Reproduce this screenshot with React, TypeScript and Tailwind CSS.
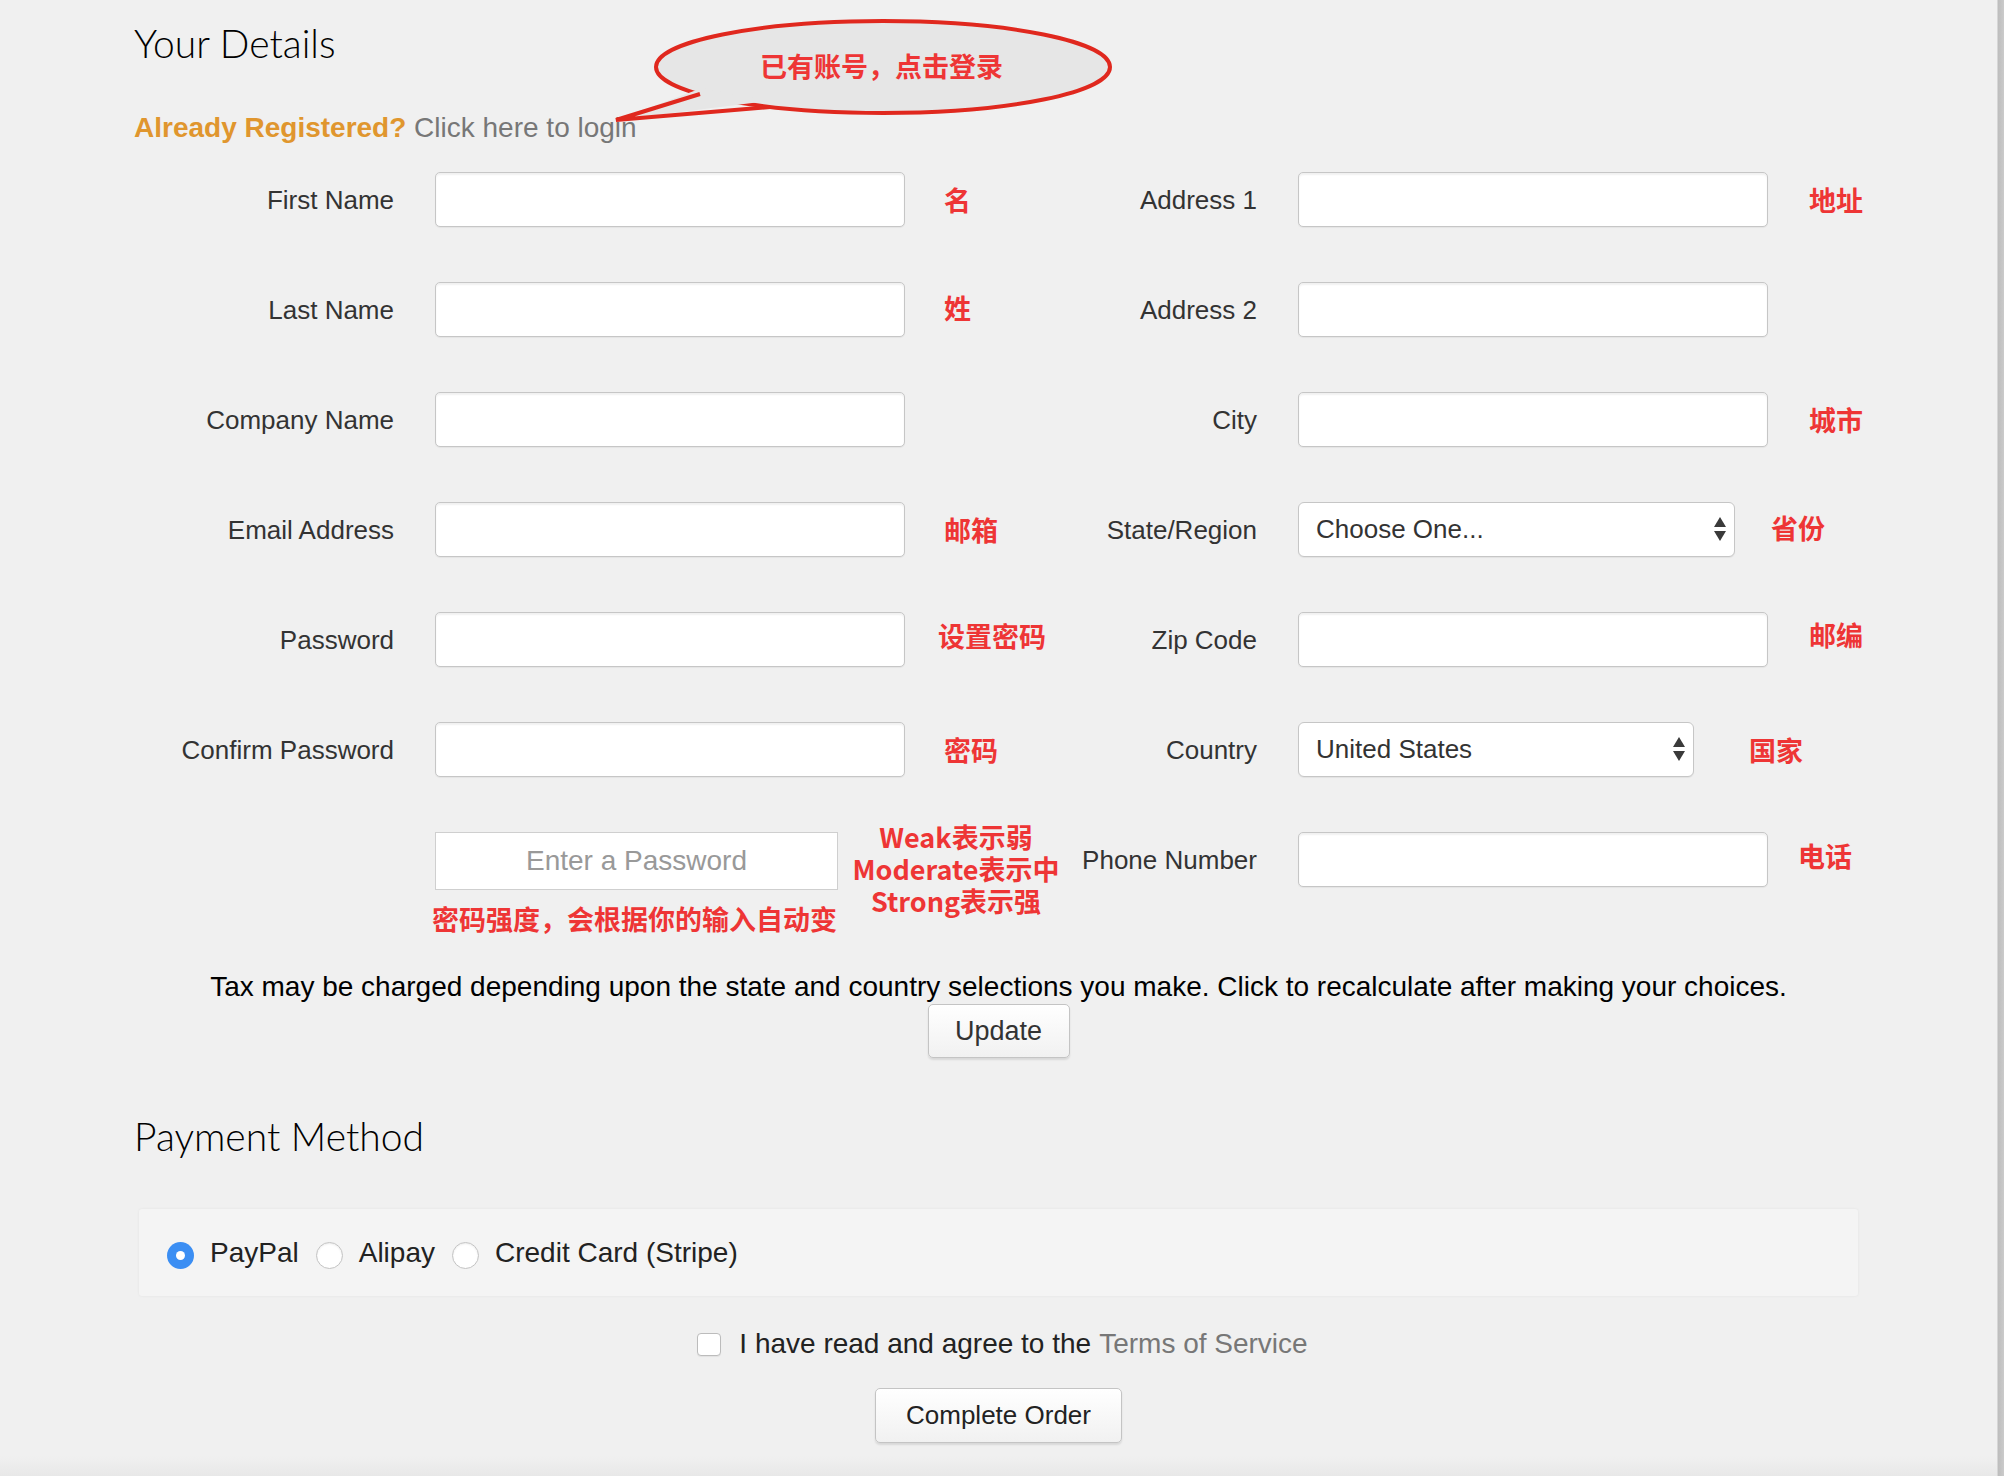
import React from 'react'

const note = "font-['Noto_Sans_CJK_SC','Noto_Sans',sans-serif] font-bold text-[27px] leading-[32px] text-[#ee3535] whitespace-nowrap shrink-0"

function TextInput() {
  return (
    <input
      type="text"
      className="h-[55px] w-[470px] shrink-0 rounded-[5px] border border-[#c6c6c6] bg-white px-4 shadow-[inset_0_2px_2px_rgba(0,0,0,0.06),0_1px_1px_rgba(0,0,0,0.05)] outline-none"
    />
  )
}

function FakeSelect({ value, width }: { value: string; width: string }) {
  return (
    <div
      className={`${width} flex h-[55px] shrink-0 items-center justify-between rounded-[6px] border border-[#c6c6c6] bg-white pl-[17px] pr-[8px] shadow-[0_1px_1px_rgba(0,0,0,0.06)]`}
    >
      <span className="text-[26px] text-[#333]">{value}</span>
      <svg width="12" height="25" viewBox="0 0 12 25">
        <path d="M6 0 L12 10 L0 10 Z" fill="#3a3a3a" />
        <path d="M0 14 L12 14 L6 24 Z" fill="#3a3a3a" />
      </svg>
    </div>
  )
}

function Row({
  label,
  children,
  right,
}: {
  label: string
  children: React.ReactNode
  right?: React.ReactNode
}) {
  return (
    <div className="flex h-[55px] items-center">
      <label className="w-[260px] shrink-0 pt-[2px] text-right text-[26px] text-[#333]">{label}</label>
      <div className="ml-[41px] flex shrink-0 items-center">{children}</div>
      {right}
    </div>
  )
}

function Radio({ checked }: { checked?: boolean }) {
  if (checked) {
    return (
      <span className="mt-[6px] flex h-[27px] w-[27px] shrink-0 items-center justify-center rounded-full bg-[#3b8ef3]">
        <span className="h-[9px] w-[9px] rounded-full bg-white" />
      </span>
    )
  }
  return (
    <span className="mt-[6px] block h-[27px] w-[27px] shrink-0 rounded-full border border-[#c3c3c3] bg-white shadow-[inset_0_1px_2px_rgba(0,0,0,0.08)]" />
  )
}

export default function App() {
  return (
    <div className="flex min-h-[1476px] w-[2004px] bg-[#f0f0f0] font-['Liberation_Sans',Arial,sans-serif] text-[#333]">
      <div className="relative flex flex-1 flex-col">
        {/* annotation bubble */}
        <div className="absolute left-[600px] top-[14px] h-[112px] w-[520px]">
          <svg width="520" height="112" viewBox="600 14 520 112" className="absolute inset-0">
            <ellipse cx="883" cy="67" rx="227" ry="46" fill="#e6e6e6" stroke="#e0281e" strokeWidth="4" />
            <polygon points="702,88 616,120 768,101" fill="#e6e6e6" />
            <polyline points="700,94 616,120 770,107" fill="none" stroke="#e0281e" strokeWidth="4" strokeLinejoin="miter" />
          </svg>
          <div className={`${note} absolute left-[160px] top-[36px]`}>已有账号，点击登录</div>
        </div>

        <div className="px-[134px]">
          <h1 className="pt-[20px] font-['Lato',sans-serif] text-[39px] leading-[47px] font-light text-black">
            Your Details
          </h1>
          <p className="mt-[45px] text-[28px] leading-[32px]">
            <span className="font-bold text-[#e0962e]">Already Registered?</span>{' '}
            <span className="text-[#777]">Click here to login</span>
          </p>

          <div className="mt-[28px] grid grid-cols-[863px_1fr] items-start gap-y-[55px]">
            <Row label="First Name" right={<span className={`${note} ml-[39px]`}>名</span>}>
              <TextInput />
            </Row>
            <Row label="Address 1" right={<span className={`${note} ml-[41px]`}>地址</span>}>
              <TextInput />
            </Row>

            <Row label="Last Name" right={<span className={`${note} ml-[39px] mb-[4px]`}>姓</span>}>
              <TextInput />
            </Row>
            <Row label="Address 2">
              <TextInput />
            </Row>

            <Row label="Company Name">
              <TextInput />
            </Row>
            <Row label="City" right={<span className={`${note} ml-[41px]`}>城市</span>}>
              <TextInput />
            </Row>

            <Row label="Email Address" right={<span className={`${note} ml-[39px]`}>邮箱</span>}>
              <TextInput />
            </Row>
            <Row label="State/Region" right={<span className={`${note} ml-[36px] mb-[4px]`}>省份</span>}>
              <FakeSelect value="Choose One..." width="w-[437px]" />
            </Row>

            <Row label="Password" right={<span className={`${note} ml-[33px] mb-[8px]`}>设置密码</span>}>
              <TextInput />
            </Row>
            <Row label="Zip Code" right={<span className={`${note} ml-[41px] mb-[10px]`}>邮编</span>}>
              <TextInput />
            </Row>

            <Row label="Confirm Password" right={<span className={`${note} ml-[39px]`}>密码</span>}>
              <TextInput />
            </Row>
            <Row label="Country" right={<span className={`${note} ml-[55px]`}>国家</span>}>
              <FakeSelect value="United States" width="w-[396px]" />
            </Row>

            {/* password strength */}
            <div className="flex items-start">
              <div className="ml-[301px] flex shrink-0 flex-col">
                <div className="flex h-[58px] w-[403px] items-center justify-center border border-[#cfcfcf] bg-white text-[28px] text-[#999]">
                  Enter a Password
                </div>
                <div className={`${note} mt-[13px] -ml-[3px]`}>密码强度，会根据你的输入自动变</div>
              </div>
              <div className={`${note} ml-[8px] -mt-[11px] w-[220px] text-center`}>
                <div>Weak表示弱</div>
                <div>Moderate表示中</div>
                <div>Strong表示强</div>
              </div>
            </div>
            <Row label="Phone Number" right={<span className={`${note} ml-[30px] mb-[8px]`}>电话</span>}>
              <TextInput />
            </Row>
          </div>

          <p className="mt-[36px] text-center text-[28px] leading-[32px] text-black">
            Tax may be charged depending upon the state and country selections you make. Click to recalculate after
            making your choices.
          </p>
          <div className="mt-[1px] flex justify-center">
            <button className="h-[54px] w-[142px] rounded-[5px] border border-[#c4c4c4] bg-gradient-to-b from-white to-[#f1f1f1] text-[27px] text-[#333] shadow-[0_2px_2px_rgba(0,0,0,0.1)]">
              Update
            </button>
          </div>

          <h2 className="mt-[55px] font-['Lato',sans-serif] text-[39px] leading-[47px] font-light text-black">
            Payment Method
          </h2>

          <div className="mx-[5px] mt-[49px] flex h-[87px] items-center rounded-[3px] bg-[#f4f4f4] pl-[28px] shadow-[0_0_3px_rgba(0,0,0,0.06)] text-[28px] text-[#222]">
            <Radio checked />
            <span className="ml-[16px]">PayPal</span>
            <span className="ml-[17px]" />
            <Radio />
            <span className="ml-[16px]">Alipay</span>
            <span className="ml-[17px]" />
            <Radio />
            <span className="ml-[16px]">Credit Card (Stripe)</span>
          </div>

          <div className="mt-[32px] flex h-[32px] items-center justify-center pl-[8px] text-[28px] leading-[32px]">
            <span className="mr-[18px] block h-[23px] w-[24px] shrink-0 rounded-[4px] border border-[#bcbcbc] bg-white shadow-[0_1px_1px_rgba(0,0,0,0.06)]" />
            <span className="text-[#222]">I have read and agree to the</span>
            <span className="ml-[8px] text-[#777]">Terms of Service</span>
          </div>

          <div className="mt-[28px] flex justify-center">
            <button className="h-[55px] w-[247px] rounded-[5px] border border-[#c4c4c4] bg-gradient-to-b from-white to-[#f1f1f1] text-[26px] text-[#222] shadow-[0_2px_2px_rgba(0,0,0,0.1)]">
              Complete Order
            </button>
          </div>
        </div>
        <div className="mt-auto h-[20px] bg-gradient-to-b from-[#f0f0f0] to-[#e8e8e8]" />
      </div>
      <div className="w-[7px] border-l border-[#d6d6d6] bg-gradient-to-r from-[#bdbdbd] to-[#cbcbcb]" />
    </div>
  )
}
